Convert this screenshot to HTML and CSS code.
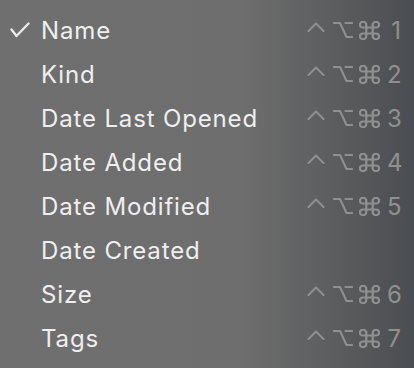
FILE: index.html
```html
<!DOCTYPE html>
<html>
<head>
<meta charset="utf-8">
<link rel="stylesheet" href="styles.css">
</head>
<body>
<div class="menu">
  <div class="row">
    <span class="check"><svg width="20" height="16" viewBox="0 0 20 16"><path d="M1.5 7.5 L6.5 14 L18.5 1.5" fill="none" stroke="#ececec" stroke-width="2.3" stroke-linecap="round" stroke-linejoin="round"/></svg></span>
    <span class="label">Name</span>
    <span class="keys"><svg class="k-ctrl" width="18" height="18" viewBox="0 0 18 18"><path d="M1.5 10 L9 2.5 L16.5 10" fill="none" stroke="currentColor" stroke-width="2.1" stroke-linecap="round" stroke-linejoin="round"/></svg><svg class="k-opt" width="20" height="18" viewBox="0 0 20 18"><path d="M1 2 H7 L13.5 16 H19 M12.5 2 H19" fill="none" stroke="currentColor" stroke-width="2.1" stroke-linecap="round" stroke-linejoin="round"/></svg><svg class="k-cmd" width="21" height="19" viewBox="2.2 2.2 19.6 19.6" preserveAspectRatio="none"><path d="M15 6v12a3 3 0 1 0 3-3H6a3 3 0 1 0 3 3V6a3 3 0 1 0-3 3h12a3 3 0 1 0-3-3" fill="none" stroke="currentColor" stroke-width="2.1" stroke-linecap="round" stroke-linejoin="round"/></svg><span class="digit">1</span></span>
  </div>
  <div class="row">
    <span class="check"></span>
    <span class="label">Kind</span>
    <span class="keys"><svg class="k-ctrl" width="18" height="18" viewBox="0 0 18 18"><path d="M1.5 10 L9 2.5 L16.5 10" fill="none" stroke="currentColor" stroke-width="2.1" stroke-linecap="round" stroke-linejoin="round"/></svg><svg class="k-opt" width="20" height="18" viewBox="0 0 20 18"><path d="M1 2 H7 L13.5 16 H19 M12.5 2 H19" fill="none" stroke="currentColor" stroke-width="2.1" stroke-linecap="round" stroke-linejoin="round"/></svg><svg class="k-cmd" width="21" height="19" viewBox="2.2 2.2 19.6 19.6" preserveAspectRatio="none"><path d="M15 6v12a3 3 0 1 0 3-3H6a3 3 0 1 0 3 3V6a3 3 0 1 0-3 3h12a3 3 0 1 0-3-3" fill="none" stroke="currentColor" stroke-width="2.1" stroke-linecap="round" stroke-linejoin="round"/></svg><span class="digit">2</span></span>
  </div>
  <div class="row">
    <span class="check"></span>
    <span class="label">Date Last Opened</span>
    <span class="keys"><svg class="k-ctrl" width="18" height="18" viewBox="0 0 18 18"><path d="M1.5 10 L9 2.5 L16.5 10" fill="none" stroke="currentColor" stroke-width="2.1" stroke-linecap="round" stroke-linejoin="round"/></svg><svg class="k-opt" width="20" height="18" viewBox="0 0 20 18"><path d="M1 2 H7 L13.5 16 H19 M12.5 2 H19" fill="none" stroke="currentColor" stroke-width="2.1" stroke-linecap="round" stroke-linejoin="round"/></svg><svg class="k-cmd" width="21" height="19" viewBox="2.2 2.2 19.6 19.6" preserveAspectRatio="none"><path d="M15 6v12a3 3 0 1 0 3-3H6a3 3 0 1 0 3 3V6a3 3 0 1 0-3 3h12a3 3 0 1 0-3-3" fill="none" stroke="currentColor" stroke-width="2.1" stroke-linecap="round" stroke-linejoin="round"/></svg><span class="digit">3</span></span>
  </div>
  <div class="row">
    <span class="check"></span>
    <span class="label">Date Added</span>
    <span class="keys"><svg class="k-ctrl" width="18" height="18" viewBox="0 0 18 18"><path d="M1.5 10 L9 2.5 L16.5 10" fill="none" stroke="currentColor" stroke-width="2.1" stroke-linecap="round" stroke-linejoin="round"/></svg><svg class="k-opt" width="20" height="18" viewBox="0 0 20 18"><path d="M1 2 H7 L13.5 16 H19 M12.5 2 H19" fill="none" stroke="currentColor" stroke-width="2.1" stroke-linecap="round" stroke-linejoin="round"/></svg><svg class="k-cmd" width="21" height="19" viewBox="2.2 2.2 19.6 19.6" preserveAspectRatio="none"><path d="M15 6v12a3 3 0 1 0 3-3H6a3 3 0 1 0 3 3V6a3 3 0 1 0-3 3h12a3 3 0 1 0-3-3" fill="none" stroke="currentColor" stroke-width="2.1" stroke-linecap="round" stroke-linejoin="round"/></svg><span class="digit">4</span></span>
  </div>
  <div class="row">
    <span class="check"></span>
    <span class="label">Date Modified</span>
    <span class="keys"><svg class="k-ctrl" width="18" height="18" viewBox="0 0 18 18"><path d="M1.5 10 L9 2.5 L16.5 10" fill="none" stroke="currentColor" stroke-width="2.1" stroke-linecap="round" stroke-linejoin="round"/></svg><svg class="k-opt" width="20" height="18" viewBox="0 0 20 18"><path d="M1 2 H7 L13.5 16 H19 M12.5 2 H19" fill="none" stroke="currentColor" stroke-width="2.1" stroke-linecap="round" stroke-linejoin="round"/></svg><svg class="k-cmd" width="21" height="19" viewBox="2.2 2.2 19.6 19.6" preserveAspectRatio="none"><path d="M15 6v12a3 3 0 1 0 3-3H6a3 3 0 1 0 3 3V6a3 3 0 1 0-3 3h12a3 3 0 1 0-3-3" fill="none" stroke="currentColor" stroke-width="2.1" stroke-linecap="round" stroke-linejoin="round"/></svg><span class="digit">5</span></span>
  </div>
  <div class="row">
    <span class="check"></span>
    <span class="label">Date Created</span>
    <span class="keys"></span>
  </div>
  <div class="row">
    <span class="check"></span>
    <span class="label">Size</span>
    <span class="keys"><svg class="k-ctrl" width="18" height="18" viewBox="0 0 18 18"><path d="M1.5 10 L9 2.5 L16.5 10" fill="none" stroke="currentColor" stroke-width="2.1" stroke-linecap="round" stroke-linejoin="round"/></svg><svg class="k-opt" width="20" height="18" viewBox="0 0 20 18"><path d="M1 2 H7 L13.5 16 H19 M12.5 2 H19" fill="none" stroke="currentColor" stroke-width="2.1" stroke-linecap="round" stroke-linejoin="round"/></svg><svg class="k-cmd" width="21" height="19" viewBox="2.2 2.2 19.6 19.6" preserveAspectRatio="none"><path d="M15 6v12a3 3 0 1 0 3-3H6a3 3 0 1 0 3 3V6a3 3 0 1 0-3 3h12a3 3 0 1 0-3-3" fill="none" stroke="currentColor" stroke-width="2.1" stroke-linecap="round" stroke-linejoin="round"/></svg><span class="digit">6</span></span>
  </div>
  <div class="row">
    <span class="check"></span>
    <span class="label">Tags</span>
    <span class="keys"><svg class="k-ctrl" width="18" height="18" viewBox="0 0 18 18"><path d="M1.5 10 L9 2.5 L16.5 10" fill="none" stroke="currentColor" stroke-width="2.1" stroke-linecap="round" stroke-linejoin="round"/></svg><svg class="k-opt" width="20" height="18" viewBox="0 0 20 18"><path d="M1 2 H7 L13.5 16 H19 M12.5 2 H19" fill="none" stroke="currentColor" stroke-width="2.1" stroke-linecap="round" stroke-linejoin="round"/></svg><svg class="k-cmd" width="21" height="19" viewBox="2.2 2.2 19.6 19.6" preserveAspectRatio="none"><path d="M15 6v12a3 3 0 1 0 3-3H6a3 3 0 1 0 3 3V6a3 3 0 1 0-3 3h12a3 3 0 1 0-3-3" fill="none" stroke="currentColor" stroke-width="2.1" stroke-linecap="round" stroke-linejoin="round"/></svg><span class="digit">7</span></span>
  </div>
</div>
</body>
</html>
```

FILE: styles.css
```css
html, body {
  margin: 0;
  padding: 0;
  width: 414px;
  height: 368px;
  overflow: hidden;
}
body {
  background: linear-gradient(to right, #6f6f6f 0%, #6e6e6e 58%, #5e5f60 78%, #4a4d51 100%);
  font-family: Inter, "Noto Sans", sans-serif;
}
.menu {
  display: flex;
  flex-direction: column;
  padding-top: 8px;
}
.row {
  height: 44px;
  display: flex;
  align-items: center;
}
.check {
  width: 41px;
  flex: none;
  display: flex;
  justify-content: flex-start;
  padding-left: 10px;
  box-sizing: border-box;
}
.check svg {
  display: block;
}
.label {
  flex: 1;
  color: #efefef;
  font-size: 24px;
  font-weight: 400;
  letter-spacing: 0.85px;
}
.keys {
  display: flex;
  align-items: center;
  color: #8f9090;
  padding-right: 13px;
}
.keys svg {
  display: block;
}
.k-ctrl { margin-right: 8px; }
.k-opt { margin-right: 6px; }
.k-cmd { margin-right: 7px; }
.digit {
  font-size: 24px;
  font-weight: 400;
  width: 14px;
  text-align: right;
}
```
